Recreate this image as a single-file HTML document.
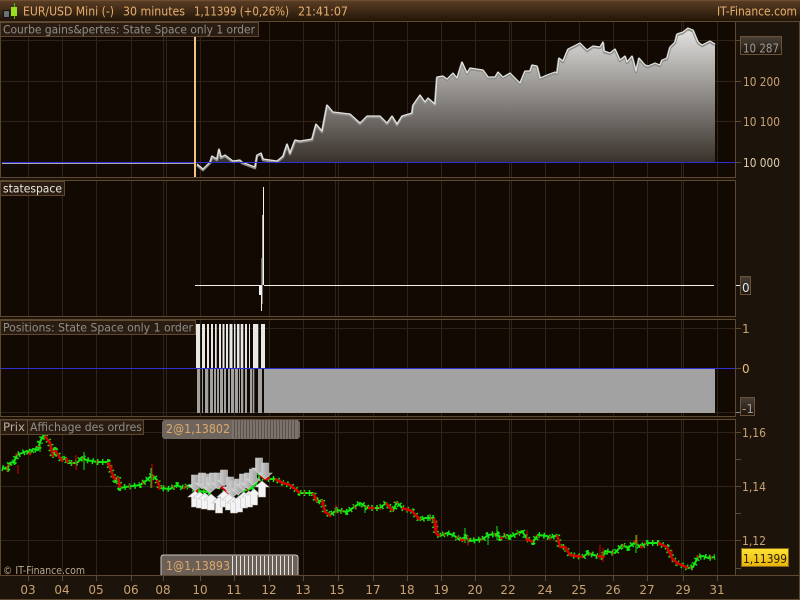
<!DOCTYPE html>
<html><head><meta charset="utf-8"><title>EUR/USD Mini</title>
<style>
html,body{margin:0;padding:0;background:#1c130b;width:800px;height:600px;overflow:hidden}
svg{display:block}
text{font-family:"DejaVu Sans","Liberation Sans",sans-serif;font-size:12px}
.ax{fill:#c9a273;font-size:12px}
.lab{fill:#8f8f8a;font-size:11.5px}
.hd{fill:#e6ae6e;font-size:12.5px}
.g{stroke:#2f2418;stroke-width:1;fill:none}
.b{stroke:#5f4830;stroke-width:1;fill:none}
</style></head><body>
<svg width="800" height="600" viewBox="0 0 800 600" xmlns="http://www.w3.org/2000/svg" shape-rendering="crispEdges">
<defs>
<linearGradient id="hdr" x1="0" y1="0" x2="0" y2="1"><stop offset="0" stop-color="#5c3f26"/><stop offset="1" stop-color="#221507"/></linearGradient>
<linearGradient id="eq" gradientUnits="userSpaceOnUse" x1="0" y1="29" x2="0" y2="162"><stop offset="0" stop-color="#e2e2e0"/><stop offset="1" stop-color="#39322c"/></linearGradient>
<linearGradient id="box" x1="0" y1="0" x2="0" y2="1"><stop offset="0" stop-color="#4a4036"/><stop offset="1" stop-color="#1c130b"/></linearGradient>
<linearGradient id="yel" x1="0" y1="0" x2="0" y2="1"><stop offset="0" stop-color="#ffe433"/><stop offset="1" stop-color="#e9b208"/></linearGradient>
<linearGradient id="gd" x1="0" y1="0" x2="1" y2="0"><stop offset="0" stop-color="#dcdcdc"/><stop offset="1" stop-color="#909090"/></linearGradient>
<path id="dn" d="M-3.500 -10H3.500V0H7L0 6L-7 0H-3.500Z" fill="url(#gd)" stroke="#d0d0d0" stroke-width=".6"/>
<path id="up" d="M-3.500 10H3.500V0H7L0 -6L-7 0H-3.500Z" fill="#f4f4f4" stroke="#c4c4c4" stroke-width=".6"/>
<polyline id="pl" points="2,468 7,469 10,463 14,462 17,455 22,453 27,451 30,453 33,449 38,450 40,442 43,436 45,436 50,443 53,457 55,450 60,458 62,460 66,458 68,463 75,463 78,462 82,457 86,460 92,461 97,462 108,462 112,473 115,480 118,477 120,488 125,487 133,486 140,485 147,480 152,475 157,480 160,488 170,489 177,485 183,488 190,485 195,490 198,491 208,492 212,487 218,485 223,488 228,493 235,493 240,492 252,488 257,482 260,475 265,479 275,479 283,483 290,485 300,493 313,493 317,502 322,500 325,512 330,515 337,510 347,512 360,503 368,508 380,508 386,503 393,511 397,502 402,508 412,511 420,520 425,518 434,518 436,533 440,536 447,533 453,535 460,540 465,537 470,541 483,539 488,535 497,534 500,538 507,535 510,537 522,531 527,539 533,542 538,535 547,536 550,538 557,535 560,547 565,547 570,555 583,557 588,553 597,556 603,557 605,551 615,553 622,545 628,548 635,542 640,547 647,543 658,543 667,547 672,558 677,563 688,568 693,567 698,557 703,556 708,558 715,557"/>
</defs>

<rect width="800" height="600" fill="#1c130b"/>
<rect width="800" height="21" fill="url(#hdr)"/>
<rect width="800" height="1" fill="#6e4e30"/>

<!-- chart background -->
<rect x="1" y="22" width="734" height="553" fill="#120a02"/>

<!-- vertical grid -->
<path class="g" d="M28.500 22V575M62.500 22V575M96.500 22V575M131.500 22V575M163.500 22V575M166.500 22V575M200.500 22V575M234.500 22V575M269.500 22V575M303.500 22V575M335.500 22V575M338.500 22V575M373.500 22V575M407.500 22V575M441.500 22V575M475.500 22V575M509.500 22V575M511.500 22V575M545.500 22V575M579.500 22V575M613.500 22V575M647.500 22V575M681.500 22V575M683.500 22V575M717.500 22V575"/>
<!-- horizontal grid -->
<path class="g" d="M1 40.500H735M1 81.500H735M1 121.500H735M1 328.500H735M1 412.500H735M1 432.500H735M1 486.500H735M1 540.500H735"/>
<!-- gaps between panels -->
<rect x="0" y="177" width="736" height="4" fill="#1c130b"/>
<rect x="0" y="316" width="736" height="4" fill="#1c130b"/>
<rect x="0" y="416" width="736" height="4" fill="#1c130b"/>

<!-- equity -->
<g shape-rendering="auto">
<path fill="url(#eq)" d="M210 162L212 157L217 160L219 150L221 158L225 156L233 162L277 162L283 157L287 145L290 154L295 141L300 142L312 140L316 125L322 132L327 106L333 113L350 115L360 124L367 117L380 117L387 124L392 117L397 125L402 117L412 114L413 106L420 96L425 103L428 99L435 105L437 78L443 77L447 80L453 74L457 79L462 63L467 74L470 69L483 71L488 78L495 78L498 73L503 78L510 74L520 84L525 72L530 72L532 66L537 67L540 79L547 76L555 73L557 74L559 59L563 62L568 50L580 44L587 51L593 47L600 48L603 43L604 52L610 54L615 50L620 61L625 57L627 63L632 57L636 72L639 59L645 66L648 67L655 64L660 66L662 61L667 59L670 48L675 43L677 35L683 33L688 29L693 31L698 43L702 46L710 42L715 45V162Z"/>
<polyline fill="none" stroke="#8e8e8c" stroke-width="2.600" stroke-linejoin="round" points="197,165 203,170 210,163 212,157 217,160 219,150 221,158 225,156 233,162 240,161 242,163 255,168 257,156 261,154 263,160 277,162 283,157 287,145 290,154 295,141 300,142 312,140 316,125 322,132 327,106 333,113 350,115 360,124 367,117 380,117 387,124 392,117 397,125 402,117 412,114 413,106 420,96 425,103 428,99 435,105 437,78 443,77 447,80 453,74 457,79 462,63 467,74 470,69 483,71 488,78 495,78 498,73 503,78 510,74 520,84 525,72 530,72 532,66 537,67 540,79 547,76 555,73 557,74 559,59 563,62 568,50 580,44 587,51 593,47 600,48 603,43 604,52 610,54 615,50 620,61 625,57 627,63 632,57 636,72 639,59 645,66 648,67 655,64 660,66 662,61 667,59 670,48 675,43 677,35 683,33 688,29 693,31 698,43 702,46 710,42 715,45"/>
<polyline fill="none" stroke="#e4e4e2" stroke-width="1.200" stroke-linejoin="round" points="197,164 203,169 210,162 212,156 217,159 219,149 221,157 225,155 233,161 240,160 242,162 255,167 257,155 261,153 263,159 277,161 283,156 287,144 290,153 295,140 300,141 312,139 316,124 322,131 327,105 333,112 350,114 360,123 367,116 380,116 387,123 392,116 397,124 402,116 412,113 413,105 420,95 425,102 428,98 435,104 437,77 443,76 447,79 453,73 457,78 462,62 467,73 470,68 483,70 488,77 495,77 498,72 503,77 510,73 520,83 525,71 530,71 532,65 537,66 540,78 547,75 555,72 557,73 559,58 563,61 568,49 580,43 587,50 593,46 600,47 603,42 604,51 610,53 615,49 620,60 625,56 627,62 632,56 636,71 639,58 645,65 648,66 655,63 660,65 662,60 667,58 670,47 675,42 677,34 683,32 688,28 693,30 698,42 702,45 710,41 715,44"/>
</g>
<rect x="2" y="163" width="193" height="1" fill="#a8a8a8"/>
<rect x="2" y="162" width="733" height="1" fill="#2f2fd6"/>
<rect x="194" y="37" width="2" height="140" fill="#f0c284"/>

<!-- statespace -->
<rect x="195" y="285" width="64" height="1" fill="#f4f0e8"/>
<rect x="264" y="285" width="450" height="1" fill="#f4f0e8"/>
<rect x="261" y="258" width="2" height="46" fill="#6b6b66"/>
<rect x="262" y="215" width="2" height="70" fill="#a8a8a4"/>
<rect x="263" y="187" width="1" height="98" fill="#f4f4f4"/>
<rect x="259" y="285" width="2" height="10" fill="#f4f4f4"/>
<rect x="261" y="285" width="1" height="26" fill="#f0f0f0"/>

<!-- positions -->
<g shape-rendering="auto">
<path fill="#e8e8e6" d="M196 324H200V368H196ZM202 324H205V368H202ZM207 324H209V368H207ZM211 324H213V368H211ZM215 324H216.700V368H215ZM219 324H221V368H219ZM222.500 324H224.500V368H222.500ZM226 324H228V368H226ZM229.500 324H232.500V368H229.500ZM234 324H235.500V368H234ZM237 324H239.500V368H237ZM240.700 324H243.300V368H240.700ZM245 324H247V368H245ZM249 324H250V368H249ZM253 324H258.300V368H253ZM261 324H265V368H261Z"/>
<path fill="#a2a2a2" d="M197 369H200V413H197ZM202 369H203V413H202ZM205 369H208.300V413H205ZM210 369H213V413H210ZM214 369H216V413H214ZM217 369H219V413H217ZM220 369H223V413H220ZM224 369H226V413H224ZM228 369H230V413H228ZM231 369H234V413H231ZM235 369H238V413H235ZM239 369H240V413H239ZM241 369H243.300V413H241ZM245 369H247V413H245ZM250 369H252V413H250ZM252.700 369H254.300V413H252.700ZM258 369H262V413H258ZM264 369H715V413H264Z"/>
</g>
<rect x="1" y="368" width="734" height="1" fill="#2f2fd6"/>

<!-- candles -->
<g shape-rendering="auto" fill="none" stroke-linejoin="round">
<use href="#pl" stroke="#12e812" stroke-width="2"/>
<use href="#pl" stroke="#12e812" stroke-width="6" stroke-dasharray="1.500 3.500"/>
<use href="#pl" stroke="#d60000" stroke-width="4" stroke-dasharray="1 13" stroke-dashoffset="5"/>
<path stroke="#d60000" stroke-width="2.500" d="M45 436L50 443L53 457M55 450L60 458L62 460M66 458L68 463M108 462L112 473L115 480M118 477L120 488M157 480L160 488M183 488L185 488M195 490L198 491M218 485L223 488L228 493L232 493M260 475L265 479L270 478M275 479L283 483L290 485L300 493M313 493L317 502M322 500L325 512L330 515M368 508L375 508M386 503L393 511M402 508L412 511L420 520M434 518L436 533L440 536M460 540L465 540M500 538L503 538M527 539L533 542M557 535L560 547L565 547L570 555L583 557M597 556L603 557M640 547L643 547M658 543L667 547L672 558L677 563L688 568"/>
<path stroke="#d60000" stroke-width="1" d="M152 464V488M18 465V474M7 466V472M229 484V497M112 465V478M437 520V536M672 550V562M603 548V562M336 505V514M468 535V546M637 535V545M527 530V542M76 455V470M600 545V560"/>
<path stroke="#12e812" stroke-width="1" d="M84 452V470M40 440V452M151 468V488M488 535V545M365 505V513M465 528V543M636 535V553M497 526V540M430 514V521"/>
</g>

<!-- arrows -->
<g shape-rendering="auto">
<use href="#dn" x="195" y="485"/><use href="#dn" x="202" y="483"/><use href="#dn" x="206" y="484"/><use href="#dn" x="210" y="487"/><use href="#dn" x="213" y="483"/><use href="#dn" x="218" y="483"/><use href="#dn" x="224" y="480"/><use href="#dn" x="230" y="487"/><use href="#dn" x="233" y="491"/><use href="#dn" x="238" y="489"/><use href="#dn" x="243" y="484"/><use href="#dn" x="248" y="483"/><use href="#dn" x="253" y="479"/><use href="#dn" x="259" y="468"/><use href="#dn" x="265" y="473"/>
<use href="#up" x="195" y="497"/><use href="#up" x="200" y="498"/><use href="#up" x="205" y="499"/><use href="#up" x="211" y="500"/><use href="#up" x="219" y="503"/><use href="#up" x="224" y="497"/><use href="#up" x="229" y="500"/><use href="#up" x="234" y="503"/><use href="#up" x="239" y="502"/><use href="#up" x="244" y="498"/><use href="#up" x="249" y="497"/><use href="#up" x="254" y="495"/><use href="#up" x="262" y="487"/>
</g>

<!-- order labels -->
<rect x="162" y="420" width="138" height="19" rx="3" fill="#6e665e"/>
<rect x="232" y="420" width="66" height="19" fill="#7c746c"/>
<path stroke="#5a524a" stroke-width="1" d="M234.500 420V439M237.500 420V439M240.500 420V439M243.500 420V439M246.500 420V439M249.500 420V439M252.500 420V439M255.500 420V439M258.500 420V439M261.500 420V439M264.500 420V439M267.500 420V439M270.500 420V439M273.500 420V439M276.500 420V439M279.500 420V439M282.500 420V439M285.500 420V439M288.500 420V439M291.500 420V439M294.500 420V439"/>
<text x="166" y="433" style="fill:#e0a868;font-size:12px" textLength="64" lengthAdjust="spacingAndGlyphs">2@1,13802</text>
<path d="M161 575V558Q161 555 164 555H295Q298 555 298 558V575" fill="#6a6058" stroke="#c8c4c0" stroke-width="1"/>
<path stroke="#e2e2e2" stroke-width="1" d="M232.500 556V575M236.500 556V575M240.500 556V575M244.500 556V575M248.500 556V575M252.500 556V575M256.500 556V575M260.500 556V575M264.500 556V575M268.500 556V575M272.500 556V575M276.500 556V575M280.500 556V575M284.500 556V575M288.500 556V575M292.500 556V575"/>
<text x="166" y="570" style="fill:#e0a868;font-size:12px" textLength="64" lengthAdjust="spacingAndGlyphs">1@1,13893</text>

<!-- panel borders -->
<path class="b" d="M0.500 21.500H735.500V177.500H0.500ZM0.500 180.500H735.500V316.500H0.500ZM0.500 319.500H735.500V416.500H0.500ZM0.500 419.500H735.500V575.500H0.500Z"/>
<path stroke="#5f4830" d="M0 575.500H800M799.500 21V600M0 599.500H800M735 21.500H800"/>

<!-- labels -->
<rect x="0.500" y="22.500" width="258" height="14" fill="#2a1c10" stroke="#5f4830"/>
<text class="lab" x="3" y="33.500" textLength="252" lengthAdjust="spacingAndGlyphs">Courbe gains&amp;pertes: State Space only 1 order</text>
<rect x="0.500" y="181.500" width="64" height="14" fill="#2a1c10" stroke="#5f4830"/>
<text x="3" y="192.500" style="fill:#ece8e0;font-size:11.500px" textLength="59" lengthAdjust="spacingAndGlyphs">statespace</text>
<rect x="0.500" y="320.500" width="195" height="14" fill="#2a1c10" stroke="#5f4830"/>
<text class="lab" x="3" y="331.500" textLength="190" lengthAdjust="spacingAndGlyphs">Positions: State Space only 1 order</text>
<rect x="0.500" y="420" width="27" height="14.500" fill="#2a1c10" stroke="#5f4830"/>
<text x="3" y="431" style="fill:#b8b0a4;font-size:11.500px" textLength="22" lengthAdjust="spacingAndGlyphs">Prix</text>
<rect x="27.500" y="420" width="116" height="14.500" fill="#2a1c10" stroke="#5f4830"/>
<text class="lab" x="30" y="431" textLength="112" lengthAdjust="spacingAndGlyphs">Affichage des ordres</text>
<text x="3" y="574" style="fill:#b8a890;font-size:11px" textLength="82" lengthAdjust="spacingAndGlyphs">© IT-Finance.com</text>

<!-- header -->
<rect x="3.500" y="10.500" width="6" height="7" fill="#6e7078" stroke="#111" stroke-width="1"/>
<rect x="14" y="3" width="1" height="16" fill="#58b010"/>
<rect x="11" y="7" width="6" height="9" fill="#9ae020"/>
<text class="hd" x="23" y="15.500" textLength="91" lengthAdjust="spacingAndGlyphs">EUR/USD Mini (-)</text>
<text class="hd" x="123" y="15.500" textLength="62" lengthAdjust="spacingAndGlyphs">30 minutes</text>
<text class="hd" x="194" y="15.500" textLength="95" lengthAdjust="spacingAndGlyphs">1,11399 (+0,26%)</text>
<text class="hd" x="298" y="15.500" textLength="50" lengthAdjust="spacingAndGlyphs">21:41:07</text>
<text class="hd" x="717" y="15.500" textLength="80" lengthAdjust="spacingAndGlyphs">IT-Finance.com</text>

<!-- right axis -->
<path stroke="#5f4830" d="M736 40.500H741M736 81.500H741M736 121.500H741M736 162.500H741M736 328.500H741M736 368.500H741M736 432.500H741M736 459.500H741M736 486.500H741M736 513.500H741M736 540.500H741M736 568.500H741"/>
<rect x="740.500" y="36.500" width="41" height="18" fill="url(#box)" stroke="#6a5238"/>
<text x="743" y="52.500" style="fill:#9c9a94;font-size:12px" textLength="36" lengthAdjust="spacingAndGlyphs">10 287</text>
<text class="ax" x="743" y="86" textLength="37" lengthAdjust="spacingAndGlyphs">10 200</text>
<text class="ax" x="743" y="126" textLength="37" lengthAdjust="spacingAndGlyphs">10 100</text>
<text x="743" y="167" style="fill:#e0ccac;font-size:12px" textLength="37" lengthAdjust="spacingAndGlyphs">10 000</text>
<rect x="736" y="285" width="4" height="1" fill="#e8e4dc"/>
<rect x="740.500" y="276.500" width="10" height="18" fill="url(#box)" stroke="#6a5238"/>
<text x="742" y="292" style="fill:#dfe8f0;font-size:12px">0</text>
<text class="ax" x="742" y="333">1</text>
<text x="742" y="373" style="fill:#e8b880;font-size:12px">0</text>
<rect x="736" y="412" width="4" height="1" fill="#888"/>
<rect x="740.500" y="397.500" width="14" height="18" fill="url(#box)" stroke="#6a5238"/>
<text x="742" y="413" style="fill:#9c9a94;font-size:12px">-1</text>
<text class="ax" x="742" y="437" textLength="24" lengthAdjust="spacingAndGlyphs">1,16</text>
<text class="ax" x="742" y="491" textLength="24" lengthAdjust="spacingAndGlyphs">1,14</text>
<text class="ax" x="742" y="545" textLength="24" lengthAdjust="spacingAndGlyphs">1,12</text>
<rect x="741.500" y="548.500" width="47" height="18" fill="url(#yel)" stroke="#85651c"/>
<text x="743" y="563" style="fill:#2a1c08;font-size:12px" textLength="44" lengthAdjust="spacingAndGlyphs">1,11399</text>

<!-- bottom axis -->
<path stroke="#5f4830" d="M28.500 576V581M62.500 576V581M96.500 576V581M131.500 576V581M163.500 576V581M200.500 576V581M234.500 576V581M269.500 576V581M303.500 576V581M338.500 576V581M373.500 576V581M407.500 576V581M441.500 576V581M475.500 576V581M509.500 576V581M545.500 576V581M579.500 576V581M613.500 576V581M647.500 576V581M683.500 576V581M717.500 576V581"/>
<g text-anchor="middle">
<text class="ax" x="28" y="594">03</text><text class="ax" x="62" y="594">04</text><text class="ax" x="96" y="594">05</text><text class="ax" x="131" y="594">06</text><text class="ax" x="163" y="594">08</text><text class="ax" x="200" y="594">10</text><text class="ax" x="234" y="594">11</text><text class="ax" x="269" y="594">12</text><text class="ax" x="303" y="594">13</text><text class="ax" x="337" y="594">15</text><text class="ax" x="373" y="594">17</text><text class="ax" x="407" y="594">18</text><text class="ax" x="441" y="594">19</text><text class="ax" x="475" y="594">20</text><text class="ax" x="508" y="594">22</text><text class="ax" x="545" y="594">24</text><text class="ax" x="579" y="594">25</text><text class="ax" x="613" y="594">26</text><text class="ax" x="647" y="594">27</text><text class="ax" x="683" y="594">29</text><text class="ax" x="717" y="594">31</text>
</g>
</svg>
</body></html>
